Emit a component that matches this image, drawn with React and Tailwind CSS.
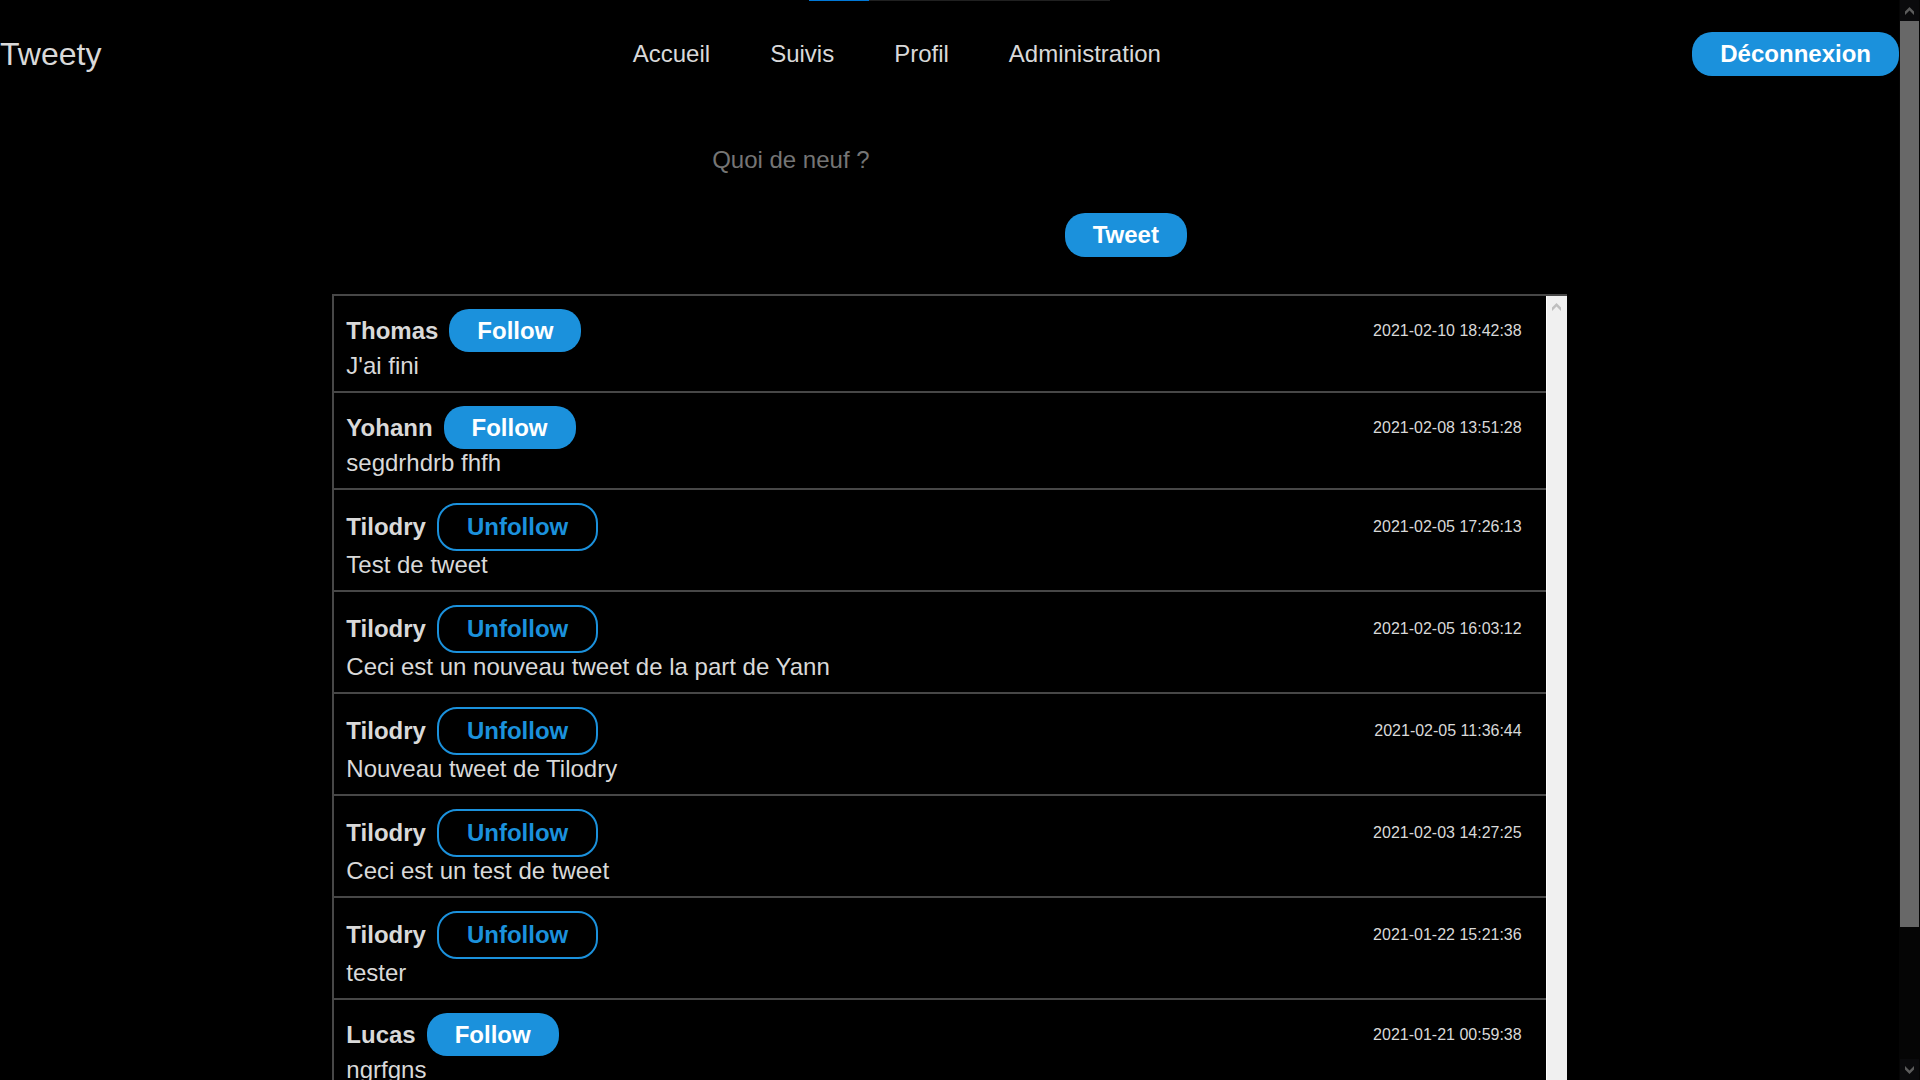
const tweets = [
  { id: 1, author: "Thomas", followed: false, date: "2021-02-10 18:42:38", text: "J'ai fini" },
  { id: 2, author: "Yohann", followed: false, date: "2021-02-08 13:51:28", text: "segdrhdrb fhfh" },
  { id: 3, author: "Tilodry", followed: true, date: "2021-02-05 17:26:13", text: "Test de tweet" },
  { id: 4, author: "Tilodry", followed: true, date: "2021-02-05 16:03:12", text: "Ceci est un nouveau tweet de la part de Yann" },
  { id: 5, author: "Tilodry", followed: true, date: "2021-02-05 11:36:44", text: "Nouveau tweet de Tilodry" },
  { id: 6, author: "Tilodry", followed: true, date: "2021-02-03 14:27:25", text: "Ceci est un test de tweet" },
  { id: 7, author: "Tilodry", followed: true, date: "2021-01-22 15:21:36", text: "tester" },
  { id: 8, author: "Lucas", followed: false, date: "2021-01-21 00:59:38", text: "ngrfgns" },
];

const links = ["Accueil", "Suivis", "Profil", "Administration"];

function PrimaryButton({ children, type = "button" }) {
  return (
    <button type={type} className="h-11 rounded-[20px] bg-[#1b91dc] px-7 font-bold text-white">
      {children}
    </button>
  );
}

function FollowButton({ followed }) {
  return followed ? (
    <button type="button" className="h-12 rounded-[20px] border-2 border-[#1b91dc] px-7 font-bold text-[#1b91dc]">
      Unfollow
    </button>
  ) : (
    <button type="button" className="h-[43px] rounded-[20px] bg-[#1b91dc] px-7 font-bold text-white">
      Follow
    </button>
  );
}

function Chevron({ down = false, className }) {
  return (
    <svg viewBox="0 0 9 8" width="9" height="8" fill="currentColor" className={className} aria-hidden="true">
      <path d={down ? "M0 0L4.5 4.5L9 0V3.5L4.5 8L0 3.5Z" : "M0 8L4.5 3.5L9 8V4.5L4.5 0L0 4.5Z"} />
    </svg>
  );
}

function Tweet({ tweet }) {
  return (
    <li className="border-b-2 border-[#474747] px-3 pt-[13px] pb-[11px]">
      <div className="flex items-center justify-between pr-3">
        <div className="flex items-center gap-[11px]">
          <h2 className="font-bold">{tweet.author}</h2>
          <FollowButton followed={tweet.followed} />
        </div>
        <time className="text-base">{tweet.date}</time>
      </div>
      <p>{tweet.text}</p>
    </li>
  );
}

export default function App() {
  return (
    <div className="flex h-screen overflow-hidden bg-black font-['Liberation_Sans',Arial,sans-serif] text-[24px] leading-7 text-[#d9d9d9]">
      <div className="flex min-w-0 flex-1 flex-col">
        <header className="relative flex shrink-0 items-center justify-between py-8">
          <div className="absolute top-0 left-[809px] flex h-px w-[301px] bg-[#202020]">
            <div className="w-1/5 bg-[#0078d7]" />
          </div>
          <h1 className="text-[32px] leading-9">Tweety</h1>
          <nav className="flex gap-[60px]">
            {links.map((link) => (
              <a key={link} href="#">{link}</a>
            ))}
          </nav>
          <PrimaryButton>Déconnexion</PrimaryButton>
        </header>

        <main className="flex min-h-0 flex-1 flex-col items-center">
          <form className="mt-[38px] mb-[37px] flex w-1/4 shrink-0 flex-col items-end">
            <textarea
              aria-label="Quoi de neuf ?"
              placeholder="Quoi de neuf ?"
              className="block h-[67px] w-full resize-none bg-transparent outline-none placeholder:text-[#757575]"
            />
            <PrimaryButton type="submit">Tweet</PrimaryButton>
          </form>

          <section className="flex min-h-0 w-[65%] flex-1 overflow-hidden border-t-2 border-l-2 border-[#474747]">
            <ul className="min-w-0 flex-1">
              {tweets.map((tweet) => (
                <Tweet key={tweet.id} tweet={tweet} />
              ))}
            </ul>
            <div className="flex w-[21px] shrink-0 justify-center border-l border-white bg-[#f0f0f0] pt-[7px]">
              <Chevron className="text-[#bfbfbf]" />
            </div>
          </section>
        </main>
      </div>

      <div className="flex w-[21px] shrink-0 flex-col bg-[#050505] px-px">
        <div className="flex h-[21px] items-center justify-center bg-[#0a0a0c]">
          <Chevron className="text-[#5c5c5c]" />
        </div>
        <div className="flex-[906] bg-[#686868]" />
        <div className="flex-[132]" />
        <div className="flex h-[21px] items-center justify-center bg-[#0a0a0c]">
          <Chevron down className="text-[#5c5c5c]" />
        </div>
      </div>
    </div>
  );
}
